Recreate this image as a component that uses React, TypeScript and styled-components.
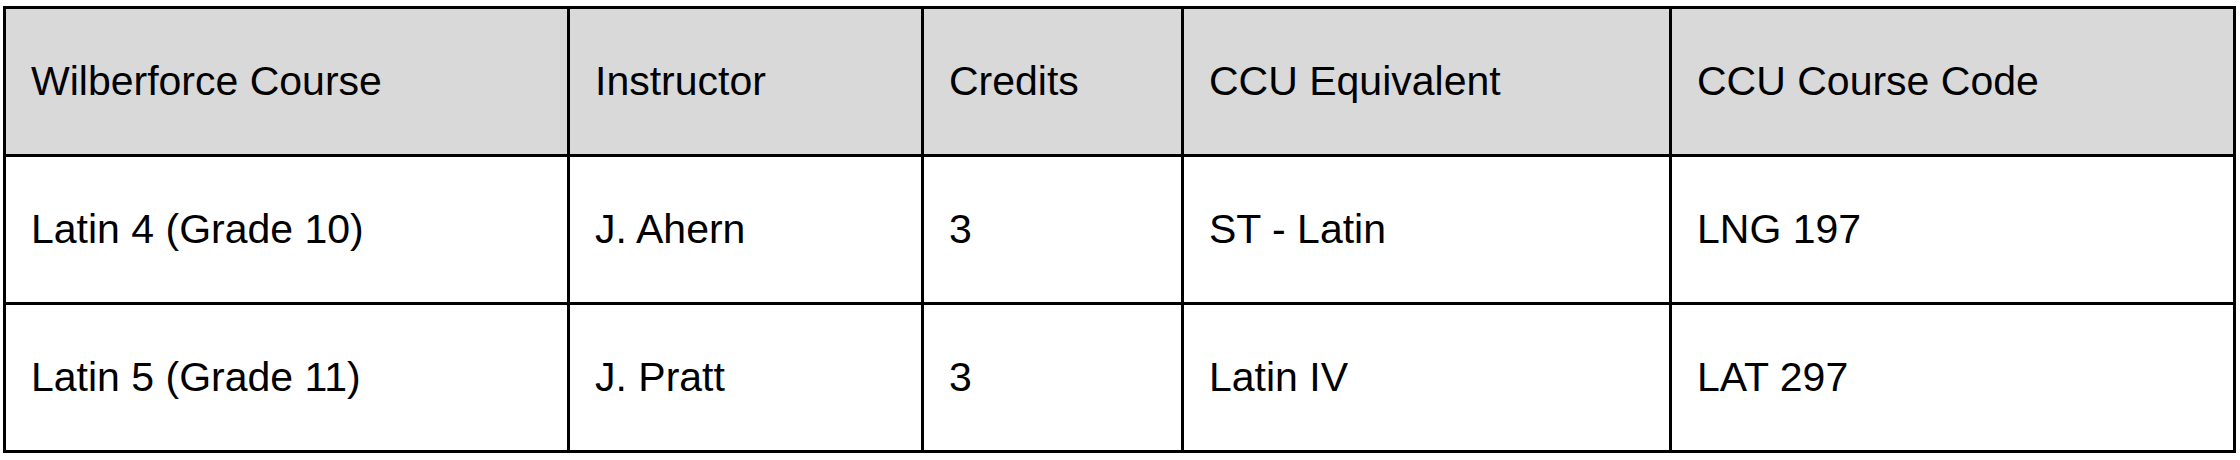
import React from 'react';
import styled, { createGlobalStyle } from 'styled-components';

const GlobalStyle = createGlobalStyle`
  html, body {
    margin: 0;
    padding: 0;
    background: #ffffff;
  }
  body {
    font-family: 'Liberation Sans', Arial, sans-serif;
  }
`;

const Page = styled.div`
  padding: 6px 0 0 3px;
`;

const Table = styled.table`
  border-collapse: collapse;
  table-layout: fixed;
  width: 2230px;
  border: 3px solid #000000;
`;

const HeadCell = styled.th`
  height: 145px;
  padding: 0 25px;
  border: 3px solid #000000;
  background: #d9d9d9;
  color: #000000;
  font-size: 41px;
  font-weight: 400;
  text-align: left;
  vertical-align: middle;
  white-space: nowrap;
`;

const Cell = styled.td`
  height: 145px;
  padding: 0 25px;
  border: 3px solid #000000;
  background: #ffffff;
  color: #000000;
  font-size: 41px;
  text-align: left;
  vertical-align: middle;
  white-space: nowrap;
`;

interface Column {
  title: string;
  width: number;
}

const columns: Column[] = [
  { title: 'Wilberforce Course', width: 564 },
  { title: 'Instructor', width: 354 },
  { title: 'Credits', width: 260 },
  { title: 'CCU Equivalent', width: 488 },
  { title: 'CCU Course Code', width: 564 },
];

const rows: string[][] = [
  ['Latin 4 (Grade 10)', 'J. Ahern', '3', 'ST - Latin', 'LNG 197'],
  ['Latin 5 (Grade 11)', 'J. Pratt', '3', 'Latin IV', 'LAT 297'],
];

const App: React.FC = () => {
  return (
    <>
      <GlobalStyle />
      <Page>
        <Table>
          <colgroup>
            {columns.map((c) => (
              <col key={c.title} style={{ width: `${c.width}px` }} />
            ))}
          </colgroup>
          <thead>
            <tr>
              {columns.map((c) => (
                <HeadCell key={c.title}>{c.title}</HeadCell>
              ))}
            </tr>
          </thead>
          <tbody>
            {rows.map((r, i) => (
              <tr key={i}>
                {r.map((v, j) => (
                  <Cell key={j}>{v}</Cell>
                ))}
              </tr>
            ))}
          </tbody>
        </Table>
      </Page>
    </>
  );
};

export default App;
